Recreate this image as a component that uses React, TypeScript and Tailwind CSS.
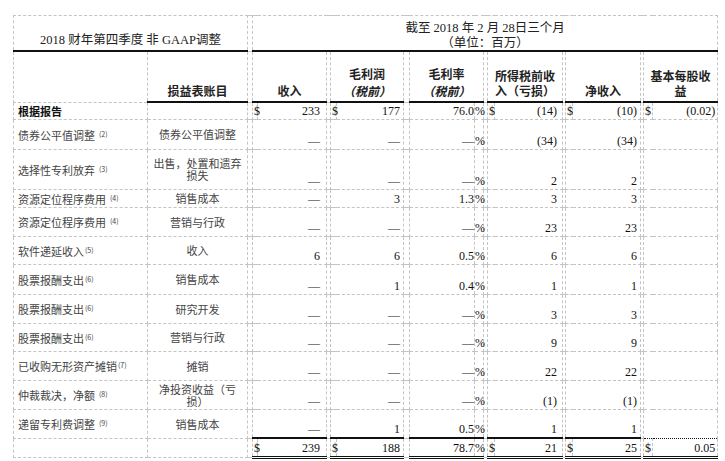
import React from "react";

const serif = "font-['Liberation_Serif','Noto_Sans_CJK_SC',serif]";
const sans = "font-['Noto_Sans_CJK_SC',sans-serif]";
const dash = "border border-dashed border-[#c4c4c4]";
const thickB = "border-b-2 ![border-bottom-style:solid] border-b-[#111]";
const thickT = "border-t-2 ![border-top-style:solid] border-t-[#111]";
const dblB = "border-b-[3px] ![border-bottom-style:double] border-b-[#111]";
const dotT = "border-t ![border-top-style:dotted] border-t-[#111]";

type Cell = { d?: boolean; v: string };
type Row = {
  label: string;
  sup?: string;
  gap?: boolean;
  bold?: boolean;
  acct: string;
  h: string;
  c: Cell;
  dd: Cell;
  e: string;
  f: Cell;
  g: Cell;
  hh?: Cell;
};

const rows: Row[] = [
  { label: "根据报告", bold: true, acct: "", h: "h-[17px]", c: { d: true, v: "233" }, dd: { d: true, v: "177" }, e: "76.0", f: { d: true, v: "(14)" }, g: { d: true, v: "(10)" }, hh: { d: true, v: "(0.02)" } },
  { label: "债券公平值调整", sup: "(2)", gap: true, acct: "债券公平值调整", h: "h-[30px]", c: { v: "—" }, dd: { v: "—" }, e: "—", f: { v: "(34)" }, g: { v: "(34)" } },
  { label: "选择性专利放弃", sup: "(3)", gap: true, acct: "出售，处置和遗弃损失", h: "h-[40px]", c: { v: "—" }, dd: { v: "—" }, e: "—", f: { v: "2" }, g: { v: "2" } },
  { label: "资源定位程序费用", sup: "(4)", gap: true, acct: "销售成本", h: "h-[18px]", c: { v: "—" }, dd: { v: "3" }, e: "1.3", f: { v: "3" }, g: { v: "3" } },
  { label: "资源定位程序费用", sup: "(4)", gap: true, acct: "营销与行政", h: "h-[29px]", c: { v: "—" }, dd: { v: "—" }, e: "—", f: { v: "23" }, g: { v: "23" } },
  { label: "软件递延收入", sup: "(5)", acct: "收入", h: "h-[28px]", c: { v: "6" }, dd: { v: "6" }, e: "0.5", f: { v: "6" }, g: { v: "6" } },
  { label: "股票报酬支出", sup: "(6)", acct: "销售成本", h: "h-[30px]", c: { v: "—" }, dd: { v: "1" }, e: "0.4", f: { v: "1" }, g: { v: "1" } },
  { label: "股票报酬支出", sup: "(6)", acct: "研究开发", h: "h-[29px]", c: { v: "—" }, dd: { v: "—" }, e: "—", f: { v: "3" }, g: { v: "3" } },
  { label: "股票报酬支出", sup: "(6)", acct: "营销与行政", h: "h-[28px]", c: { v: "—" }, dd: { v: "—" }, e: "—", f: { v: "9" }, g: { v: "9" } },
  { label: "已收购无形资产摊销", sup: "(7)", acct: "摊销", h: "h-[29px]", c: { v: "—" }, dd: { v: "—" }, e: "—", f: { v: "22" }, g: { v: "22" } },
  { label: "仲裁裁决，净额", sup: "(8)", gap: true, acct: "净投资收益（亏损）", h: "h-[29px]", c: { v: "—" }, dd: { v: "—" }, e: "—", f: { v: "(1)" }, g: { v: "(1)" } },
  { label: "递留专利费调整", sup: "(9)", gap: true, acct: "销售成本", h: "h-[29px]", c: { v: "—" }, dd: { v: "1" }, e: "0.5", f: { v: "1" }, g: { v: "1" } },
];

const numBase = `${dash} border-l-0 text-right align-bottom pb-[1px] leading-[14px] text-[12px] text-[#111] ${serif}`;
const dolBase = `${dash} text-left align-bottom pb-[1px] pl-[1px] leading-[14px] text-[12px] text-[#111] ${serif}`;
const spacer = `${dash} p-0`;
const head = `${dash} ${thickB} text-center align-bottom pb-[3px] text-[12px] leading-[15px] font-bold text-[#222]`;
const head2 = `${dash} ${thickB} text-center align-bottom pb-[2px] text-[12px] leading-[17px] font-bold text-[#222]`;

function Dol({ d, extra = "" }: { d?: boolean; extra?: string }) {
  return <td className={`${dolBase} ${d ? "" : "border-r-0"} ${extra}`}>{d ? "$" : ""}</td>;
}

function Sup({ s, gap }: { s: string; gap?: boolean }) {
  return (
    <span className={`text-[7px] align-[3px] ${gap ? "ml-[4px]" : "ml-[1px]"}`}>{s}</span>
  );
}

export default function App() {
  return (
    <div className="w-[725px] h-[461px] bg-white overflow-hidden">
      <table className={`ml-[13px] mt-[15px] w-[704px] table-fixed border-collapse ${sans} text-[#333]`}>
        <colgroup>
          <col className="w-[134px]" />
          <col className="w-[100px]" />
          <col className="w-[5px]" />
          <col className="w-[5px]" />
          <col className="w-[69px]" />
          <col className="w-[4px]" />
          <col className="w-[6px]" />
          <col className="w-[67px]" />
          <col className="w-[6px]" />
          <col className="w-[65px]" />
          <col className="w-[9px]" />
          <col className="w-[4px]" />
          <col className="w-[7px]" />
          <col className="w-[68px]" />
          <col className="w-[3px]" />
          <col className="w-[7px]" />
          <col className="w-[68px]" />
          <col className="w-[3px]" />
          <col className="w-[9px]" />
          <col className="w-[65px]" />
        </colgroup>
        <tbody>
          <tr className="h-[35px]">
            <td colSpan={2} className={`${dash} ${thickB} text-center align-bottom pb-[2px] text-[12.5px] leading-[16px] text-[#222] ${serif}`}>
              2018 财年第四季度 非 GAAP调整
            </td>
            <td className={spacer}></td>
            <td colSpan={17} className={`${dash} ${thickB} text-center align-top pt-[4px] pb-0 text-[12.5px] text-[#222] ${serif}`}>
              <div className="leading-[17px]">截至 2018 年 2 月 28日三个月</div>
              <div className="leading-[13px]">（单位：百万）</div>
            </td>
          </tr>
          <tr className="h-[51px]">
            <td className={`${dash}`}></td>
            <td className={head}>损益表账目</td>
            <td className={spacer}></td>
            <td colSpan={2} className={head}>收入</td>
            <td className={spacer}></td>
            <td colSpan={2} className={head2}>
              <div>毛利润</div>
              <div className="italic">（税前）</div>
            </td>
            <td className={spacer}></td>
            <td colSpan={2} className={head2}>
              <div>毛利率</div>
              <div className="italic">（税前）</div>
            </td>
            <td className={spacer}></td>
            <td colSpan={2} className={`${head} px-[2px]`}>所得税前收入（亏损）</td>
            <td className={spacer}></td>
            <td colSpan={2} className={head}>净收入</td>
            <td className={spacer}></td>
            <td colSpan={2} className={`${head} px-[2px]`}>基本每股收益</td>
          </tr>
          {rows.map((r, i) => {
            const last = i === rows.length - 1;
            return (
              <tr key={i} className={r.h}>
                <td className={`${dash} align-middle pl-[4px] text-[11px] leading-[12px] whitespace-nowrap ${r.bold ? "font-bold text-[#111]" : "text-[#444]"}`}>
                  {r.label}
                  {r.sup && <Sup s={r.sup} gap={r.gap} />}
                </td>
                <td className={`${dash} align-middle text-center px-[3px] text-[11px] leading-[12px] text-[#444]`}>{r.acct}</td>
                <td className={spacer}></td>
                <Dol d={r.c.d} />
                <td className={`${numBase} pr-[6px]`}>{r.c.v}</td>
                <td className={spacer}></td>
                <Dol d={r.dd.d} />
                <td className={`${numBase} pr-[3px]`}>{r.dd.v}</td>
                <td className={spacer}></td>
                <td className={`${numBase} border-r-0 pr-0`}>{r.e}</td>
                <td className={`${dash} text-left align-bottom pb-[1px] pl-0 leading-[14px] text-[12px] text-[#111] overflow-visible whitespace-nowrap ${serif}`}>%</td>
                <td className={spacer}></td>
                <Dol d={r.f.d} />
                <td className={`${numBase} pr-[5px]`}>{r.f.v}</td>
                <td className={spacer}></td>
                <Dol d={r.g.d} />
                <td className={`${numBase} pr-[3px]`}>{r.g.v}</td>
                <td className={spacer}></td>
                <Dol d={r.hh?.d} extra={last ? "border-b-0" : ""} />
                <td className={`${numBase} pr-[2px] ${last ? "border-b-0" : ""}`}>{r.hh?.v ?? ""}</td>
              </tr>
            );
          })}
          <tr className="h-[19px]">
            <td className={dash}></td>
            <td className={dash}></td>
            <td className={spacer}></td>
            <Dol d extra={`${thickT} ${dblB}`} />
            <td className={`${numBase} ${thickT} ${dblB} pr-[6px]`}>239</td>
            <td className={spacer}></td>
            <Dol d extra={`${thickT} ${dblB}`} />
            <td className={`${numBase} ${thickT} ${dblB} pr-[3px]`}>188</td>
            <td className={spacer}></td>
            <td className={`${numBase} ${thickT} ${dblB} border-r-0 pr-0`}>78.7</td>
            <td className={`${dash} ${thickT} ${dblB} text-left align-bottom pb-[1px] leading-[14px] text-[12px] text-[#111] whitespace-nowrap ${serif}`}>%</td>
            <td className={spacer}></td>
            <Dol d extra={`${thickT} ${dblB}`} />
            <td className={`${numBase} ${thickT} ${dblB} pr-[5px]`}>21</td>
            <td className={spacer}></td>
            <Dol d extra={`${thickT} ${dblB}`} />
            <td className={`${numBase} ${thickT} ${dblB} pr-[3px]`}>25</td>
            <td className={spacer}></td>
            <Dol d extra={`${dotT} ${dblB}`} />
            <td className={`${numBase} ${dotT} ${dblB} pr-[2px]`}>0.05</td>
          </tr>
        </tbody>
      </table>
    </div>
  );
}
